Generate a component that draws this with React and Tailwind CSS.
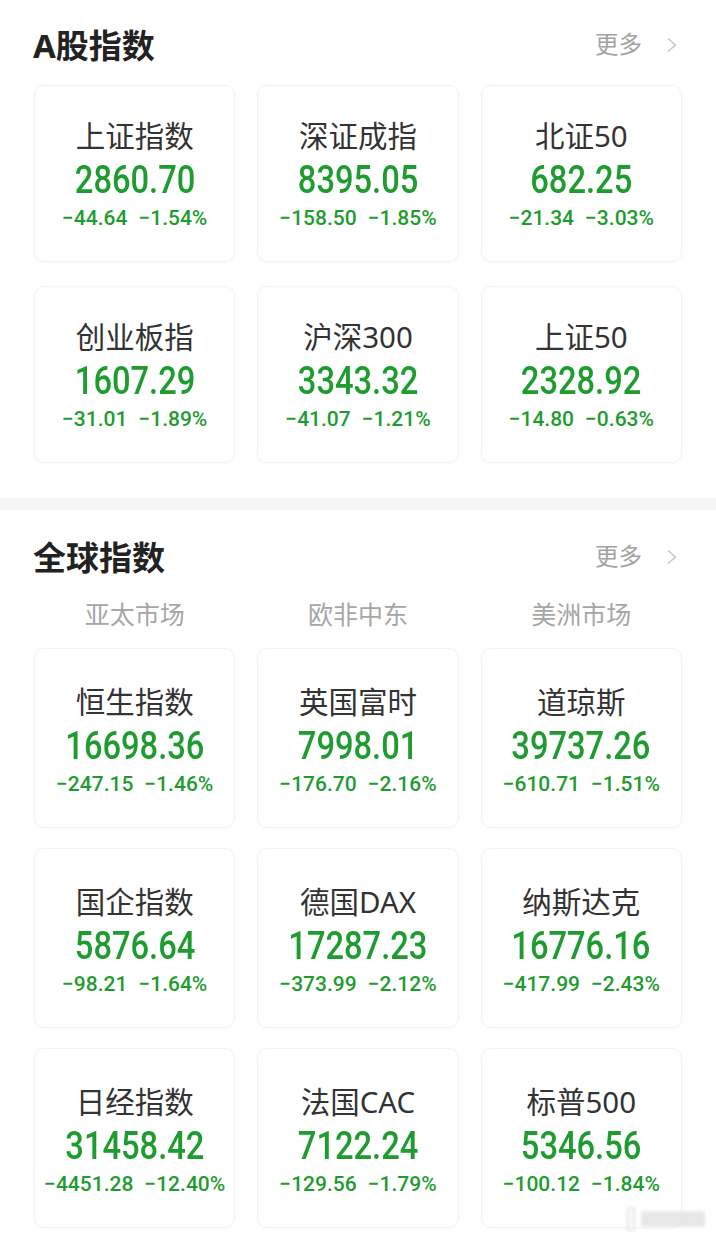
const aShares = [
  { name: "上证指数", value: "2860.70", change: "−44.64", pct: "−1.54%" },
  { name: "深证成指", value: "8395.05", change: "−158.50", pct: "−1.85%" },
  { name: "北证50", value: "682.25", change: "−21.34", pct: "−3.03%" },
  { name: "创业板指", value: "1607.29", change: "−31.01", pct: "−1.89%" },
  { name: "沪深300", value: "3343.32", change: "−41.07", pct: "−1.21%" },
  { name: "上证50", value: "2328.92", change: "−14.80", pct: "−0.63%" },
];

const globalIndices = [
  { name: "恒生指数", value: "16698.36", change: "−247.15", pct: "−1.46%" },
  { name: "英国富时", value: "7998.01", change: "−176.70", pct: "−2.16%" },
  { name: "道琼斯", value: "39737.26", change: "−610.71", pct: "−1.51%" },
  { name: "国企指数", value: "5876.64", change: "−98.21", pct: "−1.64%" },
  { name: "德国DAX", value: "17287.23", change: "−373.99", pct: "−2.12%" },
  { name: "纳斯达克", value: "16776.16", change: "−417.99", pct: "−2.43%" },
  { name: "日经指数", value: "31458.42", change: "−4451.28", pct: "−12.40%" },
  { name: "法国CAC", value: "7122.24", change: "−129.56", pct: "−1.79%" },
  { name: "标普500", value: "5346.56", change: "−100.12", pct: "−1.84%" },
];

const cjk = "font-['Noto_Sans','Noto_Sans_CJK_SC',sans-serif]";
const num = "font-['Roboto','Noto_Sans_CJK_SC',sans-serif]";

function SectionHeader({ title }) {
  return (
    <div className="flex h-[40px] items-center justify-between pl-[33px] pr-[39px]">
      <h2 className={`${cjk} text-[33px] font-bold leading-none text-[#222]`}>{title}</h2>
      <div className="flex items-center gap-[25px]">
        <span className={`${cjk} text-[23.5px] text-[#a3a3a3]`}>更多</span>
        <svg width="10" height="16" viewBox="0 0 10 16" fill="none">
          <path d="M1.5 2l7 6-7 6" stroke="#c6c6c6" strokeWidth="1.5" strokeLinecap="round" strokeLinejoin="round" />
        </svg>
      </div>
    </div>
  );
}

function IndexCard({ item, tall }) {
  return (
    <div
      className={`flex flex-col items-center justify-center rounded-[10px] border border-[#f3f3f3] bg-white shadow-[0_1px_4px_rgba(0,0,0,0.025)] ${
        tall ? "h-[180px] pt-[5px]" : "h-[177px] pt-[3px]"
      }`}
    >
      <div className={`${cjk} text-[29.5px] leading-[34px] text-[#333]`}>{item.name}</div>
      <div
        className={`${num} mt-[5px] inline-block scale-x-[0.86] text-[38px] font-medium leading-[44px] text-[#1f9c30]`}
      >
        {item.value}
      </div>
      <div className={`${num} mt-[3px] flex gap-[11px] text-[21px] font-medium leading-[26px] text-[#1f9c30]`}>
        <span>{item.change}</span>
        <span>{item.pct}</span>
      </div>
    </div>
  );
}

export default function App() {
  return (
    <div className="relative min-h-[1240px] w-[716px] bg-white">
      <section className="pt-[25px] pb-[35px]">
        <SectionHeader title="A股指数" />
        <div className="mt-[20px] grid grid-cols-3 gap-x-[22px] gap-y-[24px] px-[34px]">
          {aShares.map((item) => (
            <IndexCard key={item.name} item={item} />
          ))}
        </div>
      </section>

      <div className="h-[12px] bg-[#f5f5f5]" />

      <section className="pt-[27px] pb-[12px]">
        <SectionHeader title="全球指数" />
        <div className={`${cjk} mt-[22px] grid h-[30px] grid-cols-3 gap-x-[22px] px-[34px] text-[25px] leading-[30px] text-[#a6a6a6]`}>
          <div className="text-center">亚太市场</div>
          <div className="text-center">欧非中东</div>
          <div className="text-center">美洲市场</div>
        </div>
        <div className="mt-[19px] grid grid-cols-3 gap-x-[22px] gap-y-[20px] px-[34px]">
          {globalIndices.map((item) => (
            <IndexCard key={item.name} item={item} tall />
          ))}
        </div>
      </section>

      {/* faint stamp in the corner */}
      <div className="pointer-events-none absolute left-[627px] top-[1207px] flex items-center gap-[6px] opacity-80 blur-[1.5px]">
        <div className="h-[24px] w-[8px] rounded-[2px] border border-[#cfcfcf] bg-[#f7f7f7]" />
        <div className="h-[16px] w-[64px] rounded-[3px] bg-[#e2e2e2]" />
      </div>
    </div>
  );
}
